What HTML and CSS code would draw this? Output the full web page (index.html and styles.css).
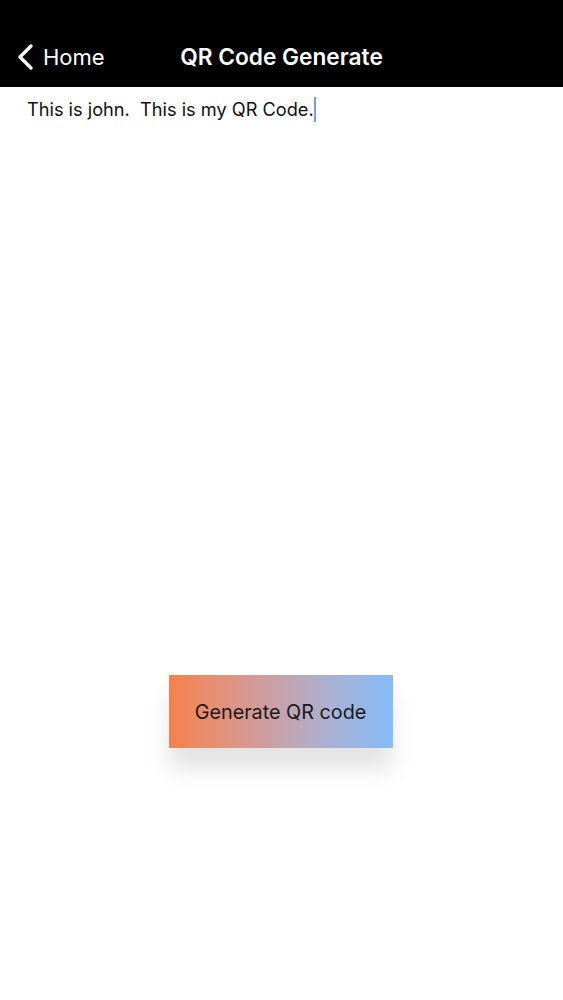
FILE: index.html
```html
<!DOCTYPE html>
<html>
<head>
<meta charset="utf-8">
<link rel="stylesheet" href="styles.css">
</head>
<body>
<header class="navbar">
  <div class="back">
    <svg class="chev" width="20" height="28" viewBox="0 0 20 28"><path d="M15 3 L4 14 L15 25" fill="none" stroke="#fff" stroke-width="3.4" stroke-linecap="round" stroke-linejoin="round"/></svg>
    <span>Home</span>
  </div>
  <div class="title">QR Code Generate</div>
</header>
<main class="content">
  <div class="input"><span>This is john.&nbsp; This is my QR Code.</span><span class="caret"></span></div>
  <div class="btn-wrap">
    <button class="gen">Generate QR code</button>
  </div>
</main>
</body>
</html>
```
FILE: styles.css
```css
* { box-sizing: border-box; }
html, body { margin: 0; padding: 0; background: #fff; }
body { font-family: Inter, "Noto Sans", sans-serif; width: 563px; height: 1000px; overflow: hidden; }
.navbar {
  height: 87px;
  background: #000;
  color: #fff;
  display: flex;
  align-items: flex-end;
  padding: 0 0 16px 16px;
  position: relative;
}
.back { display: flex; align-items: center; gap: 7px; font-size: 22px; height: 28px; }
.chev { display: block; }
.title {
  position: absolute;
  left: 0; right: 0; bottom: 16px;
  text-align: center;
  font-size: 22.7px;
  font-weight: 600;
  line-height: 28px;
  pointer-events: none;
}
.content { display: flex; flex-direction: column; }
.input {
  padding: 10px 0 0 27px;
  font-size: 18.2px;
  color: #111;
  line-height: 24px;
  height: 34px;
  display: flex;
  align-items: center;
}
.caret { display: inline-block; width: 2.5px; height: 25px; background: #8294dc; }
.btn-wrap { display: flex; justify-content: center; margin-top: 554px; }
.gen {
  width: 224px;
  height: 73px;
  border: none;
  background: linear-gradient(90deg, #f6804c 0%, #e49077 22%, #c6a2ad 50%, #a9b0d4 72%, #86bcf8 100%);
  font-family: inherit;
  font-size: 19.8px;
  color: #1a1a1a;
  box-shadow: 0 22px 22px rgba(0,0,0,0.11);
  position: relative;
  left: -1px;
}
```
